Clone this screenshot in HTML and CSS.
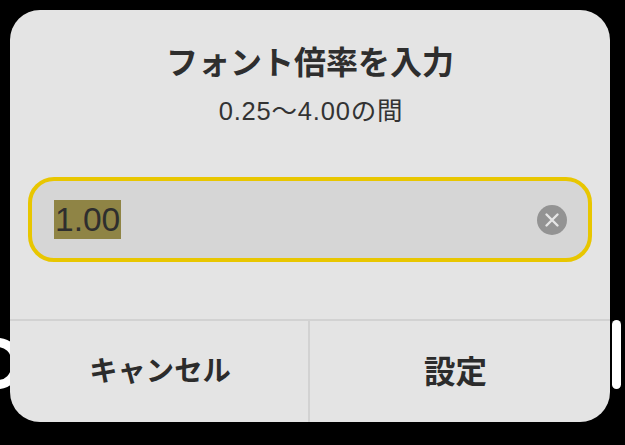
FILE: index.html
```html
<!DOCTYPE html>
<html lang="ja">
<head>
<meta charset="utf-8">
<title>フォント倍率を入力</title>
<link rel="stylesheet" href="styles.css">
</head>
<body>
<div class="screen">
  <div class="behind-ring"></div>
  <div class="behind-pill"></div>
  <div class="dialog">
    <div class="header">
      <h1 class="title">フォント倍率を入力</h1>
      <p class="subtitle">0.25～4.00の間</p>
    </div>
    <div class="field-area">
      <div class="field">
        <span class="value">1.00</span>
        <svg class="clear" viewBox="0 0 30 30" width="30" height="30" aria-hidden="true">
          <circle cx="15" cy="15" r="15" fill="#939393"/>
          <path d="M9.5 9.5L20.5 20.5M20.5 9.5L9.5 20.5" stroke="#e6e6e6" stroke-width="2.4" stroke-linecap="round"/>
        </svg>
      </div>
    </div>
    <div class="actions">
      <div class="action action-cancel">キャンセル</div>
      <div class="action action-set">設定</div>
    </div>
  </div>
</div>
</body>
</html>
```

FILE: styles.css
```css
html, body {
  margin: 0;
  padding: 0;
  background: #000;
}
.screen {
  position: relative;
  width: 625px;
  height: 445px;
  box-sizing: border-box;
  padding: 10px 15px 23px 10px;
  overflow: hidden;
  background: #000;
  font-family: "Noto Sans CJK JP", "Noto Sans", sans-serif;
}
.behind-ring {
  position: absolute;
  left: -30px;
  top: 338px;
  width: 50px;
  height: 51px;
  box-sizing: border-box;
  border: 9px solid #fff;
  border-radius: 22px;
}
.behind-pill {
  position: absolute;
  left: 612px;
  top: 320px;
  width: 9px;
  height: 69px;
  border-radius: 5px;
  background: #fff;
}
.dialog {
  position: relative;
  display: flex;
  flex-direction: column;
  width: 600px;
  height: 412px;
  border-radius: 30px;
  background: #e4e4e4;
  color: #2c2c2c;
}
.header {
  display: flex;
  flex-direction: column;
  align-items: center;
  padding-top: 27px;
}
.title {
  margin: 0;
  font-size: 32px;
  line-height: 46px;
  font-weight: 700;
  color: #2e2e2e;
}
.subtitle {
  margin: 12px 0 0 2px;
  font-family: "Liberation Sans", "Noto Sans CJK JP", sans-serif;
  font-size: 25.5px;
  letter-spacing: 0.8px;
  line-height: 32px;
  font-weight: 400;
  color: #333;
}
.field-area {
  flex: 1;
  padding: 50px 18px 0;
}
.field {
  display: flex;
  align-items: center;
  justify-content: space-between;
  box-sizing: border-box;
  height: 85px;
  padding: 0 21px 0 22px;
  border: 4px solid #e8c600;
  border-radius: 26px;
  background: #d6d6d6;
}
.value {
  display: block;
  height: 39px;
  padding: 0 1px;
  background: #8f8445;
  color: #2e2e2e;
  font-family: "Liberation Sans", "Noto Sans", sans-serif;
  font-size: 33.5px;
  line-height: 39px;
}
.clear {
  display: block;
  flex: none;
}
.actions {
  display: grid;
  grid-template-columns: 298px 1fr;
  height: 101px;
  border-top: 2px solid #d2d2d2;
}
.action {
  display: flex;
  align-items: center;
  justify-content: center;
  padding-bottom: 6px;
  font-weight: 700;
  color: #2c2c2c;
}
.action-cancel {
  padding-left: 2px;
  font-size: 28.3px;
}
.action-set {
  padding-right: 9px;
  font-size: 31.5px;
  border-left: 2px solid #d2d2d2;
}
```
